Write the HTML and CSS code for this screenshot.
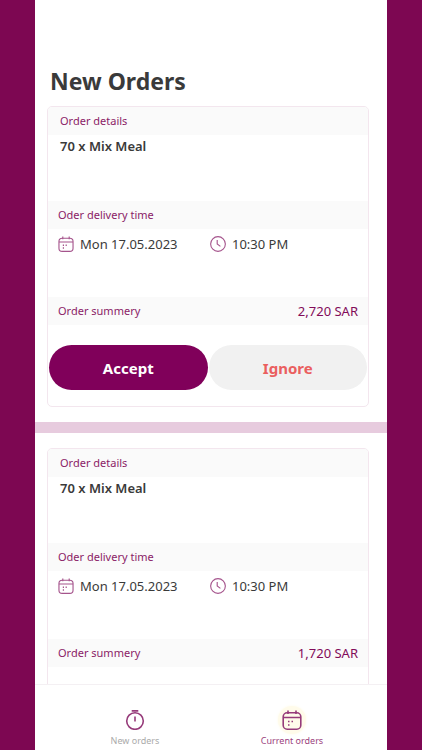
FILE: index.html
```html
<!DOCTYPE html>
<html lang="en">
<head>
<meta charset="utf-8">
<meta name="viewport" content="width=device-width, initial-scale=1">
<title>New Orders</title>
<link rel="stylesheet" href="styles.css">
</head>
<body>
<svg class="sprite" aria-hidden="true">
  <symbol id="calendar" viewBox="0 0 20 20">
    <rect x="1.2" y="2.8" width="17.6" height="16.4" rx="4"/>
    <path d="M1.2 7.5H18.8M6 .5V4M14 .5V4"/>
    <path class="dots" d="M6 11.5H7.5M9.5 11.5H11M6 15H7.5"/>
  </symbol>
  <symbol id="clock" viewBox="0 0 20 20">
    <circle cx="10" cy="10" r="9.2"/>
    <path d="M9 5V10L13 13"/>
  </symbol>
  <symbol id="stopwatch" viewBox="0 0 20 20">
    <circle cx="10" cy="11" r="8.3"/>
    <path d="M6.7 .9H13.3M10 6.5V11.5"/>
  </symbol>
</svg>
<div class="screen">
  <main class="orders">
    <h1 class="title">New Orders</h1>
    <article class="card">
      <h2 class="band band-details">Order details</h2>
      <p class="item">70 x Mix Meal</p>
      <h2 class="band">Oder delivery time</h2>
      <div class="when">
        <span class="date"><svg class="icon"><use href="#calendar"/></svg>Mon 17.05.2023</span>
        <span class="time"><svg class="icon"><use href="#clock"/></svg>10:30 PM</span>
      </div>
      <h2 class="band">Order summery <span class="price">2,720 SAR</span></h2>
      <div class="actions">
        <button class="btn accept" type="button">Accept</button>
        <button class="btn ignore" type="button">Ignore</button>
      </div>
    </article>
    <hr class="divider">
    <article class="card">
      <h2 class="band band-details">Order details</h2>
      <p class="item">70 x Mix Meal</p>
      <h2 class="band">Oder delivery time</h2>
      <div class="when">
        <span class="date"><svg class="icon"><use href="#calendar"/></svg>Mon 17.05.2023</span>
        <span class="time"><svg class="icon"><use href="#clock"/></svg>10:30 PM</span>
      </div>
      <h2 class="band">Order summery <span class="price">1,720 SAR</span></h2>
      <div class="space"></div>
    </article>
  </main>
  <nav class="tabs">
    <a class="tab" href="#new"><svg class="tab-icon"><use href="#stopwatch"/></svg>New orders</a>
    <a class="tab current" href="#current"><svg class="tab-icon"><use href="#calendar"/></svg>Current orders</a>
  </nav>
</div>
</body>
</html>
```
FILE: styles.css
```css
* { box-sizing: border-box; }

body {
  margin: 0;
  padding: 0 35px;
  background: #7d0752;
  color: #3a3a3a;
  font-family: "Noto Sans", "Open Sans", sans-serif;
  font-size: 13px;
  line-height: 18px;
}

h1, h2, p { margin: 0; }

.sprite { display: none; }

.screen {
  display: flex;
  flex-direction: column;
  height: 100vh;
  background: #fff;
}

.orders {
  flex: 1;
  min-height: 0;
  padding-top: 64px;
  overflow: hidden;
}

.title {
  margin-left: 15px;
  font-size: 23px;
  font-weight: 700;
  line-height: 34px;
}

.card {
  margin: 8px 18px 15px 12px;
  border: 1px solid #f3e6ee;
  border-radius: 5px;
  overflow: hidden;
}

.band {
  display: flex;
  align-items: center;
  justify-content: space-between;
  height: 28px;
  padding: 0 10px;
  background: #fafafa;
  color: #8b1c67;
  font-size: 11px;
  font-weight: 400;
}

.band-details { padding-left: 12px; }

.price { font-size: 13px; color: #820b59; }

.item {
  height: 66px;
  padding: 2px 12px;
  font-weight: 600;
}

.when {
  display: flex;
  height: 68px;
  padding: 6px 10px;
}

.date, .time {
  display: flex;
  align-items: center;
  gap: 6px;
  height: 18px;
}

.date { width: 152px; }

.icon {
  width: 16px;
  height: 16px;
  fill: none;
  stroke: #a5548c;
  stroke-width: 1.4;
}

.dots { stroke-width: 1.7; }

.actions {
  display: flex;
  gap: 1px;
  padding: 20px 1px 16px;
}

.btn {
  flex: 1;
  height: 45px;
  border: 0;
  border-radius: 23px;
  font: inherit;
  font-size: 15px;
  font-weight: 700;
}

.accept { background: #80005a; color: #fff; }
.ignore { background: #f1f1f1; color: #ea5f5f; }

.divider {
  height: 11px;
  margin: 0;
  border: 0;
  background: #e7cbde;
}

.divider + .card { margin-top: 15px; }

.space { height: 80px; }

.tabs {
  display: flex;
  justify-content: space-between;
  height: 66px;
  padding: 21px 55px 0 60px;
  border-top: 1px solid #f4f0f3;
}

.tab {
  display: flex;
  flex-direction: column;
  align-items: center;
  width: 80px;
  color: #aaa;
  font-size: 9px;
  line-height: 14px;
  text-decoration: none;
  white-space: nowrap;
}

.current { color: #9b3f7e; }

.tab-icon {
  width: 28px;
  height: 28px;
  padding: 4px;
  overflow: visible;
  border-radius: 50%;
  fill: none;
  stroke: #963b7a;
  stroke-width: 1.6;
}

.current .tab-icon {
  background: #fffbea;
  box-shadow: 0 0 3px #fffbea;
}
```
